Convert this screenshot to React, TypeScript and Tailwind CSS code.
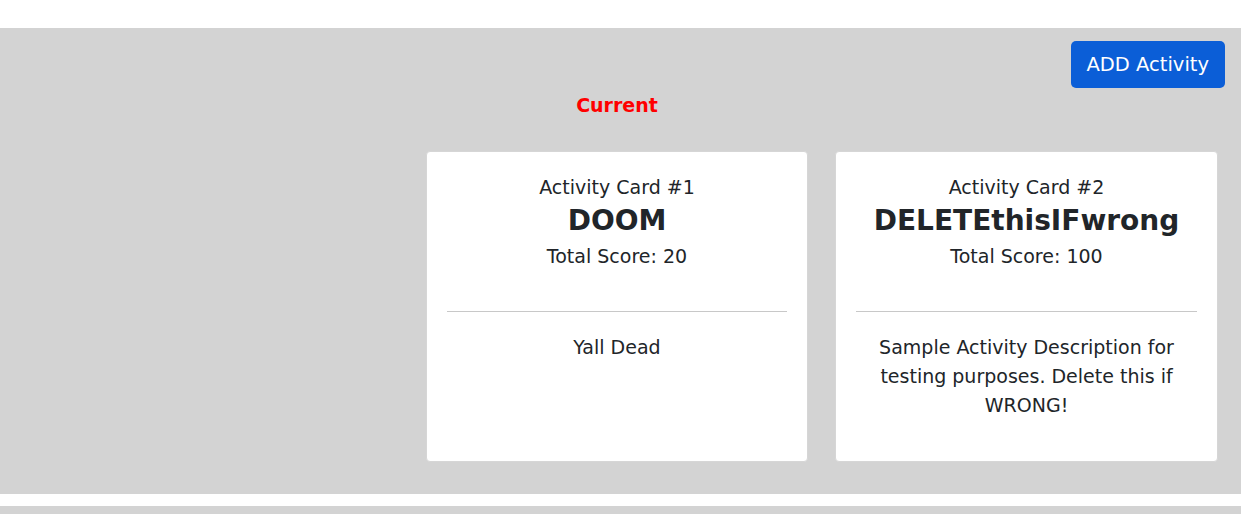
const cards = [
  {
    id: 1,
    name: "DOOM",
    score: 20,
    description: "Yall Dead",
  },
  {
    id: 2,
    name: "DELETEthisIFwrong",
    score: 100,
    description: "Sample Activity Description for testing purposes. Delete this if WRONG!",
  },
];

const ActivityCard = ({ card }: { card: (typeof cards)[number] }) => {
  return (
    <div className="bg-white rounded-[4px] border border-[#d6d6d6] h-[311px] px-5 text-center text-[#212529]">
      <div className="pt-[19px] pb-[38px] border-b border-[#c8c8c8]">
        <p className="text-[19px] leading-[32px]">Activity Card #{card.id}</p>
        <h3 className="text-[28px] leading-[36px] font-bold">{card.name}</h3>
        <p className="text-[19px] leading-[34px]">Total Score: {card.score}</p>
      </div>
      <p className="text-[19px] leading-[29px] pt-[21px] px-2">{card.description}</p>
    </div>
  );
};

export default function App() {
  return (
    <div className="min-h-[514px] bg-white font-['DejaVu_Sans',sans-serif]">
      <div className="h-[28px]" />
      <div className="bg-[#d3d3d3] h-[466px] pt-[13px]">
        <div className="flex justify-end pr-[16px]">
          <button className="bg-[#0b5ed7] text-white text-[19.5px] h-[47px] px-[16px] rounded-[5px]">
            ADD Activity
          </button>
        </div>
        <div className="grid grid-cols-[1fr_382px_383px] gap-[27px] pl-[17px] pr-[23px]">
          <div />
          <div>
            <h2 className="text-center text-[#ff0000] font-bold text-[19px] leading-[24px] mt-[5px] mb-[34px]">
              Current
            </h2>
            <ActivityCard card={cards[0]} />
          </div>
          <div className="pt-[63px]">
            <ActivityCard card={cards[1]} />
          </div>
        </div>
      </div>
      <div className="h-[12px]" />
      <div className="bg-[#d3d3d3] h-[8px]" />
    </div>
  );
}
